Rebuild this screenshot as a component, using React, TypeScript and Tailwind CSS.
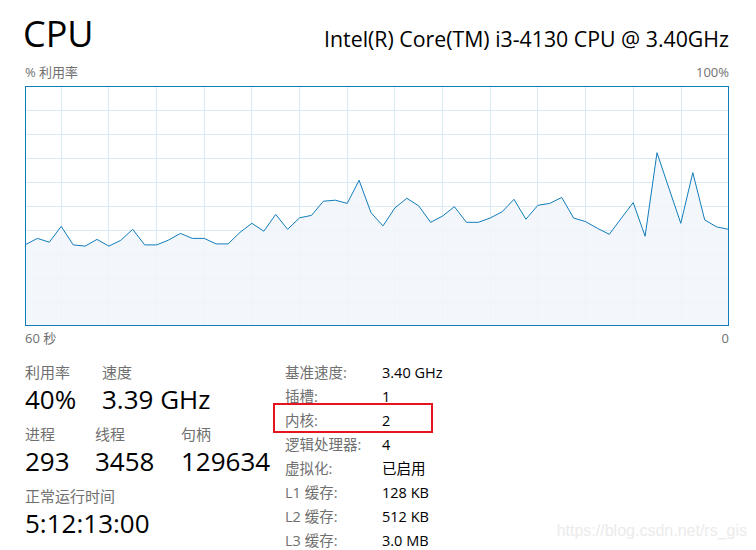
import React from "react";

// last 60 seconds of CPU usage, oldest first (percent)
const usage = [
  33.9, 36.5, 34.9, 41.5, 33.8, 33.3, 36.1, 33.3, 35.7, 40.3,
  33.8, 33.8, 35.8, 38.6, 36.5, 36.5, 34.2, 34.2, 39.0, 42.8,
  39.5, 46.5, 40.3, 45.1, 46.1, 52.0, 52.4, 51.1, 60.7, 47.2,
  41.7, 49.2, 53.2, 50.1, 43.2, 45.8, 49.7, 43.2, 43.2, 45.0,
  47.6, 52.8, 44.5, 50.3, 51.1, 53.6, 45.0, 43.5, 40.7, 38.2,
  44.9, 51.4, 37.4, 72.2, 57.4, 42.8, 63.9, 44.2, 41.3, 40.3,
];

const FONT = {
  fontFamily: '"Open Sans", "Noto Sans CJK SC", sans-serif',
};

const W = 704;
const H = 240;
const V_LINES = [36, 83, 131, 179, 226, 274, 322, 369, 417, 465, 512, 560, 608, 656];

function UsageChart() {
  const pts = usage.map((u, i) => {
    const x = 0.5 + (i * (W - 1)) / 59;
    const y = H - (u * H) / 100;
    return `${x.toFixed(1)},${y.toFixed(1)}`;
  });
  const area = `0.5,${H} ${pts.join(" ")} ${W - 0.5},${H}`;

  return (
    <svg width={W} height={H} className="block">
      {/* grid */}
      {Array.from({ length: 9 }, (_, k) => (
        <line key={`h${k}`} x1={0} x2={W} y1={24 * (k + 1) + 0.5} y2={24 * (k + 1) + 0.5} stroke="#d9eaf4" />
      ))}
      {V_LINES.map((x) => (
        <line key={`v${x}`} x1={x + 0.5} x2={x + 0.5} y1={0} y2={H} stroke="#d9eaf4" />
      ))}
      <polygon points={area} fill="#f1f6fa" fillOpacity={0.85} />
      <polyline points={pts.join(" ")} fill="none" stroke="#117dbb" strokeWidth={1} />
      <rect x={0.5} y={0.5} width={W - 1} height={H - 1} fill="none" stroke="#117dbb" />
    </svg>
  );
}

function Stat({ label, value, className = "" }: { label: string; value: string; className?: string }) {
  return (
    <div className={className}>
      <div className="text-[15px] leading-[18px] text-[#707070]">{label}</div>
      <div className="text-[26px] leading-[36px] text-black">{value}</div>
    </div>
  );
}

const SPECS: [string, string][] = [
  ["基准速度:", "3.40 GHz"],
  ["插槽:", "1"],
  ["内核:", "2"],
  ["逻辑处理器:", "4"],
  ["虚拟化:", "已启用"],
  ["L1 缓存:", "128 KB"],
  ["L2 缓存:", "512 KB"],
  ["L3 缓存:", "3.0 MB"],
];

export default function App() {
  return (
    <div className="relative h-[550px] w-[756px] overflow-hidden bg-white pl-[25px] pr-[27px]" style={FONT}>
      {/* title */}
      <div className="flex items-baseline justify-between pt-[12px]">
        <h1 className="-ml-[2px] text-[36px] leading-[44px] text-black">CPU</h1>
        <div className="text-[21.3px] leading-[26px] text-black">Intel(R) Core(TM) i3-4130 CPU @ 3.40GHz</div>
      </div>

      <div className="mt-[7px] flex justify-between text-[13px] leading-[18px] text-[#707070]">
        <span>% 利用率</span>
        <span>100%</span>
      </div>

      <div className="mt-[5px]">
        <UsageChart />
      </div>

      <div className="mt-[3px] flex justify-between text-[13px] leading-[18px] text-[#707070]">
        <span>60 秒</span>
        <span>0</span>
      </div>

      {/* stats */}
      <div className="mt-[14px] flex">
        <div className="w-[260px] pt-[2px]">
          <div className="flex">
            <Stat label="利用率" value="40%" className="w-[77px]" />
            <Stat label="速度" value="3.39 GHz" />
          </div>
          <div className="mt-[8px] flex">
            <Stat label="进程" value="293" className="w-[70px]" />
            <Stat label="线程" value="3458" className="w-[86px]" />
            <Stat label="句柄" value="129634" />
          </div>
          <Stat label="正常运行时间" value="5:12:13:00" className="mt-[8px]" />
        </div>

        <div className="grid grid-cols-[97px_auto] text-[14.5px] leading-[24px]">
          {SPECS.map(([k, v]) => (
            <React.Fragment key={k}>
              <div className="text-[#707070]">{k}</div>
              <div className="text-black">{v}</div>
            </React.Fragment>
          ))}
        </div>
      </div>

      {/* annotation box around the core count */}
      <div className="absolute left-[273px] top-[403px] h-[30px] w-[160px] border-2 border-[#e5141e]" />

      <div
        className="absolute bottom-[7px] right-[9px] text-[16px] leading-[24px] text-[#ebebeb]"
        style={{ fontFamily: '"Liberation Sans", Arial, sans-serif' }}
      >
        https://blog.csdn.net/rs_gis
      </div>
    </div>
  );
}
